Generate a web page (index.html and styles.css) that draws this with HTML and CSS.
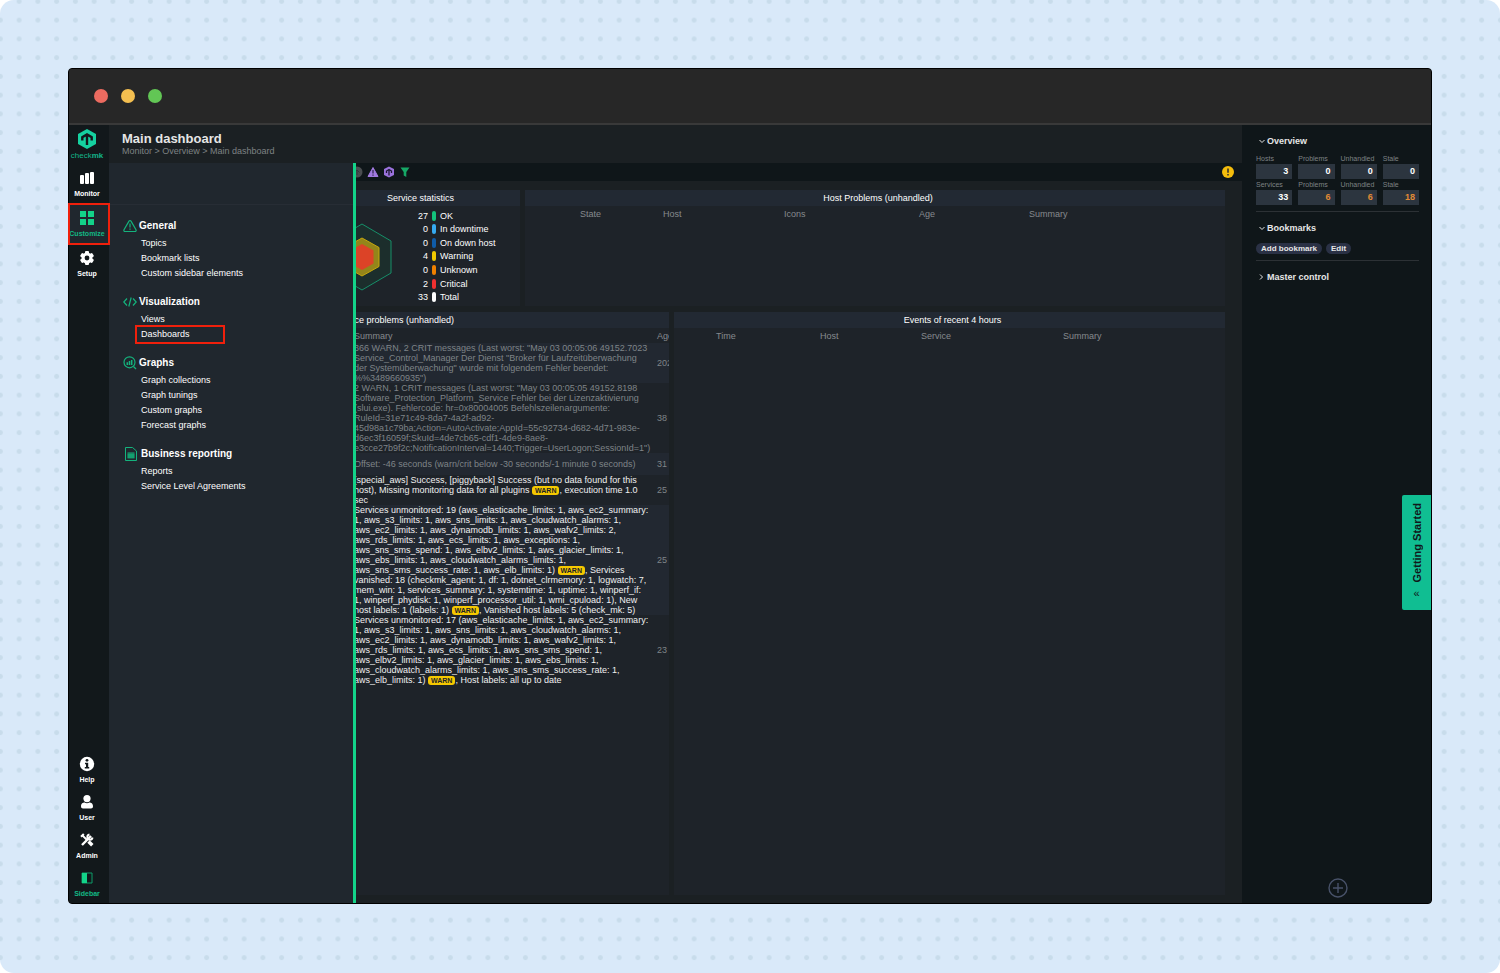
FILE: index.html
```html
<!DOCTYPE html>
<html lang="en">
<head>
  <meta charset="UTF-8">
  <meta name="viewport" content="width=device-width, initial-scale=1.0">
  <title>Main dashboard</title>
  <link rel="stylesheet" href="styles.css">
</head>
<body>
  <div class="backdrop">
    <div class="window">
      <div class="titlebar">
        <span class="dot red"></span>
        <span class="dot yellow"></span>
        <span class="dot green"></span>
      </div>

      <div class="app">
        <nav class="main-nav">
          <a class="logo" href="#">
            <svg width="20" height="22" viewBox="0 0 20 22"><path d="M10 1 19 6v10l-9 5-9-5V6z" fill="#15d1a0"/><path d="M5.300 12.500V9.200L10 6.500l4.700 2.700v3.300M10 7v10" fill="none" stroke="#12181b" stroke-width="2.400"/></svg>
            <span>check<b>mk</b></span>
          </a>
          <a class="nav-item" href="#">
            <svg width="16" height="16" viewBox="0 0 16 16" fill="#fff"><rect x="1" y="5" width="4" height="9" rx="1"/><rect x="6" y="3" width="4" height="11" rx="1"/><rect x="11" y="2" width="4" height="12" rx="1"/></svg>
            Monitor
          </a>
          <a class="nav-item active marked" href="#">
            <svg width="16" height="16" viewBox="0 0 16 16" fill="#13d389"><rect x="1" y="1" width="6" height="6"/><rect x="9" y="1" width="6" height="6"/><rect x="1" y="9" width="6" height="6"/><rect x="9" y="9" width="6" height="6"/></svg>
            Customize
          </a>
          <a class="nav-item" href="#">
            <svg width="16" height="16" viewBox="0 0 16 16"><g fill="#fff"><circle cx="8" cy="8" r="5.500"/><rect x="6" y="1" width="4" height="14" rx="1"/><rect x="6" y="1" width="4" height="14" rx="1" transform="rotate(60 8 8)"/><rect x="6" y="1" width="4" height="14" rx="1" transform="rotate(120 8 8)"/></g><circle cx="8" cy="8" r="2.400" fill="#12181b"/></svg>
            Setup
          </a>
          <div class="nav-bottom">
            <a class="nav-item" href="#">
              <svg width="16" height="16" viewBox="0 0 16 16"><circle cx="8" cy="8" r="7.200" fill="#fff"/><circle cx="8" cy="4.300" r="1.400" fill="#12181b"/><path d="M6 6.700h3.200v4.300h1v1.500H5.800V11h1.200V8.200H6z" fill="#12181b"/></svg>
              Help
            </a>
            <a class="nav-item" href="#">
              <svg width="16" height="16" viewBox="0 0 16 16" fill="#fff"><circle cx="8" cy="4.600" r="3.600"/><path d="M2 12.300c0-3 2-3.800 3.600-3.800 1.300.9 3.500.9 4.800 0 1.600 0 3.600.8 3.600 3.800 0 1.500-.8 2.200-2 2.200H4c-1.200 0-2-.7-2-2.200z"/></svg>
              User
            </a>
            <a class="nav-item" href="#">
              <svg width="16" height="16" viewBox="0 0 16 16" fill="none" stroke="#fff"><path d="M3 13 12 4" stroke-width="2.400"/><path d="M10.500 2.500a2.600 2.600 0 1 0 3 3" stroke-width="2"/><path d="m3 3 5 5" stroke-width="1.800"/><path d="m9.500 9.500 3.800 3.800" stroke-width="3.400"/><path d="M2 4.800 4.800 2" stroke-width="2"/></svg>
              Admin
            </a>
            <a class="nav-item active" href="#">
              <svg width="16" height="16" viewBox="0 0 16 16"><path d="M3 3h10v10H3z" fill="none" stroke="#0d9b68"/><path d="M3 3h5v10H3z" fill="#13d389"/></svg>
              Sidebar
            </a>
          </div>
        </nav>

        <main class="content">
          <header class="page-header">
            <h1>Main dashboard</h1>
            <p>Monitor &gt; Overview &gt; Main dashboard</p>
          </header>

          <div class="toolbar">
            <svg width="12" height="12" viewBox="0 0 12 12"><circle cx="6" cy="6" r="5.500" fill="#4a4d50"/><path d="M6 9V4M3.500 6.500 6 4l2.500 2.500" fill="none" stroke="#33383b"/></svg>
            <svg width="12" height="12" viewBox="0 0 12 12"><path d="M6 1.500 11 10.500H1z" fill="#a27be0" stroke="#a27be0" stroke-linejoin="round"/><path d="M6 4v3.500M6 8.500v1.200" stroke="#372a58" stroke-width="1.300"/></svg>
            <svg width="12" height="12" viewBox="0 0 12 12"><path d="M6 .5 11 3v6l-5 2.500L1 9V3z" fill="#9a72dc"/><path d="M6 9.500V4M3.500 7V5L6 3.500 8.500 5v2" fill="none" stroke="#1d1733" stroke-width="1.300"/></svg>
            <svg width="12" height="12" viewBox="0 0 12 12"><path d="M1.500 1.500h9L7.300 6v5L4.700 9.500V6z" fill="#16a866"/></svg>
            <svg class="alert" width="12" height="12" viewBox="0 0 12 12"><circle cx="6" cy="6" r="6" fill="#f5bd0c"/><path d="M6 2.500v4.300M6 8v1.500" stroke="#2b2b2b" stroke-width="1.500"/></svg>
          </div>

          <div class="dashboard">
            <div class="row top">
              <section class="panel host-stats"><h2></h2></section>
              <section class="panel service-stats">
                <h2>Service statistics</h2>
                <div class="stats">
                  <svg width="60" height="68" viewBox="0 0 60 68"><path d="M30 1 59 18v32L30 67 1 50V18z" fill="#1c2e2c" stroke="#168f69"/><path d="M30 15 47 24.500v19L30 53 13 43.500v-19z" fill="#94851a" stroke="#c5a70c"/><path d="M30 21 41.500 27.500v13L30 47l-11.500-6.500v-13z" fill="#dc4327"/></svg>
                  <ul>
                    <li><span>27</span><i class="ok"></i>OK</li>
                    <li><span>0</span><i class="downtime"></i>In downtime</li>
                    <li><span>0</span><i class="down"></i>On down host</li>
                    <li><span>4</span><i class="warning"></i>Warning</li>
                    <li><span>0</span><i class="unknown"></i>Unknown</li>
                    <li><span>2</span><i class="critical"></i>Critical</li>
                    <li><span>33</span><i class="total"></i>Total</li>
                  </ul>
                </div>
              </section>
              <section class="panel host-problems">
                <h2>Host Problems (unhandled)</h2>
                <table>
                  <tr><th class="c-state">State</th><th class="c-host">Host</th><th class="c-icons">Icons</th><th class="c-age">Age</th><th>Summary</th></tr>
                </table>
              </section>
            </div>

            <div class="row bottom">
              <section class="panel service-problems">
                <h2>Service problems (unhandled)</h2>
                <table>
                  <thead>
                    <tr><th class="c-summary">Summary</th><th>Age</th></tr>
                  </thead>
                  <tbody>
                    <tr>
                      <td>366 WARN, 2 CRIT messages (Last worst: "May 03 00:05:06 49152.7023<br>Service_Control_Manager Der Dienst "Broker für Laufzeitüberwachung<br>der Systemüberwachung" wurde mit folgendem Fehler beendet:<br>%%3489660935")</td>
                      <td>202</td>
                    </tr>
                    <tr>
                      <td>2 WARN, 1 CRIT messages (Last worst: "May 03 00:05:05 49152.8198<br>Software_Protection_Platform_Service Fehler bei der Lizenzaktivierung<br>(slui.exe). Fehlercode: hr=0x80004005 Befehlszeilenargumente:<br>RuleId=31e71c49-8da7-4a2f-ad92-<br>45d98a1c79ba;Action=AutoActivate;AppId=55c92734-d682-4d71-983e-<br>d6ec3f16059f;SkuId=4de7cb65-cdf1-4de9-8ae8-<br>e3cce27b9f2c;NotificationInterval=1440;Trigger=UserLogon;SessionId=1")</td>
                      <td>38</td>
                    </tr>
                    <tr>
                      <td>Offset: -46 seconds (warn/crit below -30 seconds/-1 minute 0 seconds)</td>
                      <td>31</td>
                    </tr>
                    <tr class="fresh">
                      <td>[special_aws] Success, [piggyback] Success (but no data found for this<br>host), Missing monitoring data for all plugins <mark>WARN</mark>, execution time 1.0<br>sec</td>
                      <td>25</td>
                    </tr>
                    <tr class="fresh">
                      <td>Services unmonitored: 19 (aws_elasticache_limits: 1, aws_ec2_summary:<br>1, aws_s3_limits: 1, aws_sns_limits: 1, aws_cloudwatch_alarms: 1,<br>aws_ec2_limits: 1, aws_dynamodb_limits: 1, aws_wafv2_limits: 2,<br>aws_rds_limits: 1, aws_ecs_limits: 1, aws_exceptions: 1,<br>aws_sns_sms_spend: 1, aws_elbv2_limits: 1, aws_glacier_limits: 1,<br>aws_ebs_limits: 1, aws_cloudwatch_alarms_limits: 1,<br>aws_sns_sms_success_rate: 1, aws_elb_limits: 1) <mark>WARN</mark>, Services<br>vanished: 18 (checkmk_agent: 1, df: 1, dotnet_clrmemory: 1, logwatch: 7,<br>mem_win: 1, services_summary: 1, systemtime: 1, uptime: 1, winperf_if:<br>1, winperf_phydisk: 1, winperf_processor_util: 1, wmi_cpuload: 1), New<br>host labels: 1 (labels: 1) <mark>WARN</mark>, Vanished host labels: 5 (check_mk: 5)</td>
                      <td>25</td>
                    </tr>
                    <tr class="fresh">
                      <td>Services unmonitored: 17 (aws_elasticache_limits: 1, aws_ec2_summary:<br>1, aws_s3_limits: 1, aws_sns_limits: 1, aws_cloudwatch_alarms: 1,<br>aws_ec2_limits: 1, aws_dynamodb_limits: 1, aws_wafv2_limits: 1,<br>aws_rds_limits: 1, aws_ecs_limits: 1, aws_sns_sms_spend: 1,<br>aws_elbv2_limits: 1, aws_glacier_limits: 1, aws_ebs_limits: 1,<br>aws_cloudwatch_alarms_limits: 1, aws_sns_sms_success_rate: 1,<br>aws_elb_limits: 1) <mark>WARN</mark>, Host labels: all up to date</td>
                      <td>23</td>
                    </tr>
                  </tbody>
                </table>
              </section>
              <section class="panel events">
                <h2>Events of recent 4 hours</h2>
                <table>
                  <tr><th class="c-time">Time</th><th class="c-ehost">Host</th><th class="c-service">Service</th><th>Summary</th></tr>
                </table>
              </section>
            </div>
          </div>

          <!-- Customize mega menu, opens over the dashboard -->
          <div class="mega-menu">
            <div class="menu-search"></div>
            <div class="menu-groups">
              <section>
                <h3><svg width="14" height="14" viewBox="0 0 14 14" fill="none" stroke="#14b37d" stroke-width="1.200"><path d="M7 1.500c.5 0 .8.300 1 .6l5 8.700c.4.800 0 1.700-1 1.700H2c-1 0-1.400-.9-1-1.700l5-8.700c.2-.3.5-.6 1-.6z"/><path d="M7 4.500v4M7 9.500v1.200"/></svg>General</h3>
                <a href="#">Topics</a>
                <a href="#">Bookmark lists</a>
                <a href="#">Custom sidebar elements</a>
              </section>
              <section>
                <h3><svg width="14" height="14" viewBox="0 0 14 14" fill="none" stroke="#14b37d" stroke-width="1.200"><path d="M4 3.500.8 7 4 10.500M10 3.500 13.200 7 10 10.500M8.200 2.500l-2.400 9"/></svg>Visualization</h3>
                <a href="#">Views</a>
                <a class="marked-link" href="#">Dashboards</a>
              </section>
              <section>
                <h3><svg width="14" height="14" viewBox="0 0 14 14" fill="none" stroke="#14b37d" stroke-width="1.200"><circle cx="6.500" cy="6.300" r="5.500"/><path d="m10.500 10.500 2.500 2.500"/><path d="M4.300 9V6.300M6.500 9V5M8.700 9V4" stroke-width="1.500"/></svg>Graphs</h3>
                <a href="#">Graph collections</a>
                <a href="#">Graph tunings</a>
                <a href="#">Custom graphs</a>
                <a href="#">Forecast graphs</a>
              </section>
              <section>
                <h3><svg class="wide" width="16" height="14" viewBox="0 0 16 14" fill="none" stroke="#14b37d"><path d="M2.500.5h7l4 3.500v9.500h-11z"/><path d="M4.500 6.500h7v5h-7z" fill="#128a62" stroke="none"/><path d="M4.500 6h7M4.500 8h7M4.500 10h7"/></svg>Business reporting</h3>
                <a href="#">Reports</a>
                <a href="#">Service Level Agreements</a>
              </section>
            </div>
          </div>
        </main>

        <aside class="sidebar">
          <section>
            <h2><svg width="8" height="8" viewBox="0 0 8 8"><path d="m1.500 3 2.500 2.500L6.500 3" fill="none" stroke="#e6e6e6"/></svg>Overview</h2>
            <div class="tactical">
              <div><span>Hosts</span><a href="#">3</a></div>
              <div><span>Problems</span><a href="#">0</a></div>
              <div><span>Unhandled</span><a href="#">0</a></div>
              <div><span>Stale</span><a href="#">0</a></div>
              <div><span>Services</span><a href="#">33</a></div>
              <div><span>Problems</span><a class="bad" href="#">6</a></div>
              <div><span>Unhandled</span><a class="bad" href="#">6</a></div>
              <div><span>Stale</span><a class="bad" href="#">18</a></div>
            </div>
          </section>
          <section>
            <h2><svg width="8" height="8" viewBox="0 0 8 8"><path d="m1.500 3 2.500 2.500L6.500 3" fill="none" stroke="#e6e6e6"/></svg>Bookmarks</h2>
            <div class="buttons">
              <button type="button">Add bookmark</button>
              <button type="button">Edit</button>
            </div>
          </section>
          <section>
            <h2><svg width="8" height="8" viewBox="0 0 8 8"><path d="M2 1.500 4.500 4 2 6.500" fill="none" stroke="#e6e6e6"/></svg>Master control</h2>
          </section>
          <button class="add-snapin" type="button" aria-label="Add element">
            <svg width="20" height="20" viewBox="0 0 20 20" fill="none" stroke="#485269" stroke-width="1.400"><circle cx="10" cy="10" r="9"/><path d="M10 5v10M5 10h10"/></svg>
          </button>
        </aside>

        <button class="getting-started" type="button"><span class="vertical">Getting Started</span><span class="chevron">«</span></button>
      </div>
    </div>
  </div>
</body>
</html>
```
FILE: styles.css
```css
* {
  box-sizing: border-box;
}
body {
  margin: 0;
  background: #fff;
  font-family: "Liberation Sans", Arial, sans-serif;
  font-size: 9px;
  line-height: 10px;
  color: #fff;
}
h1, h2, h3, p, ul {
  margin: 0;
  padding: 0;
}
a {
  color: inherit;
  text-decoration: none;
}
button {
  font-family: inherit;
  border: none;
  padding: 0;
  cursor: pointer;
}
svg {
  display: block;
  flex: none;
}

.backdrop {
  display: flex;
  min-height: 100vh;
  padding: 68px 68px 69px;
  border-radius: 14px;
  background-color: #d9e9f9;
  background-image: radial-gradient(circle, #c8dceb 2px, transparent 3px);
  background-size: 1.25vw 1.25vw;
  background-position: -9px -8px;
}
.window {
  flex: 1;
  min-width: 0;
  display: flex;
  flex-direction: column;
  border: 1px solid #000;
  border-radius: 4px;
  background: #12181b;
}
.titlebar {
  display: flex;
  align-items: center;
  gap: 13px;
  height: 56px;
  padding-left: 25px;
  border-radius: 3px 3px 0 0;
  background: #272727;
  border-bottom: 2px solid #393939;
}
.dot {
  width: 14px;
  height: 14px;
  border-radius: 50%;
}
.red { background: #ec6b60; }
.yellow { background: #f4bf50; }
.green { background: #62c655; }

.app {
  position: relative;
  flex: 1;
  display: flex;
}

/* left navigation */
.main-nav {
  display: flex;
  flex-direction: column;
  width: 40px;
  border-radius: 0 0 0 3px;
  background: #12181b;
}
.logo {
  display: flex;
  flex-direction: column;
  align-items: center;
  gap: 1px;
  height: 39px;
  padding: 3px 4px 0 0;
  font-size: 8px;
  color: #13b58a;
}
.nav-item {
  display: flex;
  flex-direction: column;
  align-items: center;
  justify-content: center;
  gap: 3px;
  height: 40px;
  padding-right: 4px;
  font-size: 7px;
  font-weight: bold;
}
.nav-item.active {
  color: #13b985;
}
.nav-item.marked {
  position: relative;
  z-index: 1;
  background: #20272e;
  outline: 2px solid #f0200c;
  outline-offset: -1px;
}
.nav-bottom {
  margin-top: auto;
}
.nav-bottom .nav-item {
  height: 38px;
}

/* page */
.content {
  position: relative;
  flex: 1;
  min-width: 0;
  display: flex;
  flex-direction: column;
  background: #1b2023;
}
.page-header {
  height: 38px;
  padding: 7px 13px 0;
}
.page-header h1 {
  font-size: 13px;
  line-height: 14px;
  color: #e6e6e6;
}
.page-header p {
  color: #7e8284;
}
.toolbar {
  display: flex;
  align-items: center;
  gap: 4px;
  height: 18px;
  padding: 0 8px 0 242px;
  background: #0f1619;
}
.toolbar .alert {
  margin-left: auto;
}
.dashboard {
  flex: 1;
  display: flex;
  flex-direction: column;
  gap: 6px;
  padding: 9px 17px 8px 4px;
}
.row {
  display: flex;
  gap: 5px;
}
.row.top {
  height: 116px;
}
.row.bottom {
  flex: 1;
}
.panel {
  overflow: hidden;
  background: #1e2329;
}
.panel h2 {
  height: 16px;
  padding-left: 6px;
  font-size: 9px;
  font-weight: normal;
  line-height: 16px;
  text-align: center;
  background: #222933;
}
.host-stats, .service-stats {
  flex: 0 0 203px;
}
.service-stats {
  flex-basis: 199px;
}
.service-stats h2 {
  padding-left: 0;
}
.host-problems, .events {
  flex: 1;
}
.service-problems {
  flex: 0 0 556px;
}

.stats {
  display: flex;
  align-items: center;
  gap: 12px;
  height: 100px;
  padding: 1px 0 0 11px;
}
.stats ul {
  display: flex;
  flex-direction: column;
  justify-content: space-between;
  height: 94px;
  list-style: none;
}
.stats li {
  display: flex;
  align-items: center;
  gap: 4px;
  height: 12px;
}
.stats li span {
  width: 24px;
  text-align: right;
}
.stats i {
  width: 4px;
  height: 10px;
  border-radius: 2px;
}
.ok { background: #13c27c; }
.downtime { background: #36aaf0; }
.down { background: #0f5ba8; }
.warning { background: #f0c800; }
.unknown { background: #f08000; }
.critical { background: #f03030; }
.total { background: #fff; }

table {
  width: 100%;
  table-layout: fixed;
  border-collapse: collapse;
}
th, td {
  padding: 0;
  text-align: left;
  white-space: nowrap;
}
th {
  height: 15px;
  font-weight: normal;
  color: #868a8e;
}
td {
  height: 22px;
  color: #7f8488;
}
tbody tr:nth-child(odd) td {
  background: #222831;
}
.fresh td:first-child {
  color: #f0f0f0;
}
.c-state { width: 138px; padding-left: 55px; }
.c-host { width: 121px; }
.c-icons { width: 135px; }
.c-age { width: 110px; }
.c-time { width: 146px; padding-left: 42px; }
.c-ehost { width: 101px; }
.c-service { width: 142px; }
.c-summary { width: 544px; }
.service-problems th:first-child,
.service-problems td:first-child {
  padding-left: 241px;
}
mark {
  padding: 1px 3px;
  border-radius: 3px;
  font-size: 7px;
  font-weight: bold;
  line-height: 7px;
  color: #1e2329;
  background: #f5c800;
}

/* mega menu */
.mega-menu {
  position: absolute;
  top: 38px;
  bottom: 0;
  left: 0;
  width: 247px;
  background: #20272e;
  border-right: 3px solid #13d389;
}
.menu-search {
  height: 42px;
  border-bottom: 1px solid #272d35;
}
.menu-groups {
  display: flex;
  flex-direction: column;
  gap: 11px;
  padding: 11px 14px;
}
.menu-groups h3 {
  display: flex;
  align-items: center;
  gap: 2px;
  font-size: 10px;
  line-height: 20px;
}
.menu-groups a {
  display: block;
  margin-left: 14px;
  padding-left: 4px;
  line-height: 15px;
}
.menu-groups .marked-link {
  width: 86px;
  outline: 2px solid #f0200c;
}

/* right sidebar */
.sidebar {
  display: flex;
  flex-direction: column;
  width: 189px;
  padding: 7px 12px 5px 14px;
  border-radius: 0 0 3px 0;
  background: #0f1619;
}
.sidebar section {
  padding-bottom: 6px;
  margin-bottom: 7px;
  border-bottom: 1px solid #2c3135;
}
.sidebar section:nth-of-type(3) {
  border-bottom: none;
}
.sidebar h2 {
  display: flex;
  align-items: center;
  gap: 1px;
  padding-left: 2px;
  font-size: 9px;
  line-height: 18px;
  color: #e6e6e6;
}
.tactical {
  display: grid;
  grid-template-columns: repeat(4, 1fr);
  gap: 1px 6px;
  margin-top: 4px;
}
.tactical span {
  display: block;
  font-size: 7px;
  color: #7e8284;
}
.tactical a {
  display: block;
  height: 15px;
  padding-right: 4px;
  font-weight: bold;
  line-height: 15px;
  text-align: right;
  background: #2c353f;
}
.tactical .bad {
  color: #e08a35;
}
.buttons {
  display: flex;
  gap: 4px;
  margin-top: 6px;
}
.buttons button {
  height: 11px;
  padding: 0 5px;
  border-radius: 6px;
  font-size: 8px;
  font-weight: bold;
  line-height: 11px;
  color: #e6e6e6;
  background: #2a3145;
}
.add-snapin {
  margin: auto auto 0;
  background: none;
}
.getting-started {
  position: absolute;
  top: 370px;
  right: 0;
  display: flex;
  flex-direction: column;
  align-items: center;
  gap: 4px;
  width: 29px;
  height: 115px;
  padding-top: 8px;
  border-radius: 2px 0 0 2px;
  font-size: 11px;
  line-height: 14px;
  color: #10181b;
  background: #10be92;
}
.vertical {
  writing-mode: vertical-rl;
  transform: rotate(180deg);
  font-weight: bold;
}
```
